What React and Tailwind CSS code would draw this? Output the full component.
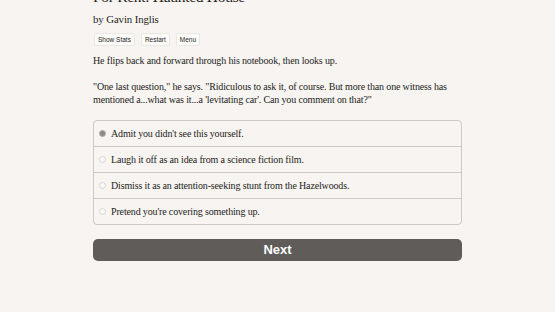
export default function App() {
  const options = [
    "Admit you didn't see this yourself.",
    "Laugh it off as an idea from a science fiction film.",
    "Dismiss it as an attention-seeking stunt from the Hazelwoods.",
    "Pretend you're covering something up.",
  ];
  return (
    <div className="w-[555px] h-[312px] overflow-hidden bg-[#f7f4f1] text-[#262422]" style={{ fontFamily: '"Liberation Serif", serif' }}>
      <div className="w-[369px] ml-[93px] -mt-[13px]">
        <h1 className="text-[15.5px] leading-[20px] m-0 tracking-[-0.3px]">For Rent: Haunted House</h1>
        <div className="text-[10.8px] leading-[14px] mt-[5px] tracking-[-0.1px]">by Gavin Inglis</div>
        <div className="flex gap-[6px] mt-[7px] ml-[1px]" style={{ fontFamily: '"Liberation Sans", sans-serif' }}>
          <button className="text-[6.5px] leading-[7px] px-[3px] py-[2px] bg-[#fcfbf9] border border-[#ebe7e3] rounded-[2px]">Show Stats</button>
          <button className="text-[6.5px] leading-[7px] px-[3px] py-[2px] bg-[#fcfbf9] border border-[#ebe7e3] rounded-[2px]">Restart</button>
          <button className="text-[6.5px] leading-[7px] px-[3px] py-[2px] bg-[#fcfbf9] border border-[#ebe7e3] rounded-[2px]">Menu</button>
        </div>
        <p className="text-[10px] leading-[13px] mt-[8px] tracking-[-0.15px]">He flips back and forward through his notebook, then looks up.</p>
        <p className="text-[10px] leading-[13px] mt-[13px] tracking-[-0.15px]">"One last question," he says. "Ridiculous to ask it, of course. But more than one witness has mentioned a...what was it...a 'levitating car'. Can you comment on that?"</p>
        <div className="mt-[14px] border border-[#cdc9c5] rounded-[4px]">
          {options.map((o, i) => (
            <div key={i} className={"h-[25px] box-content flex items-center pl-[5px] text-[10px] tracking-[-0.15px] " + (i > 0 ? "border-t border-[#cdc9c5]" : "")}>
              <span className={"w-[7px] h-[7px] rounded-full border mr-[5px] " + (i === 0 ? "bg-[#8d8986] border-[#b0aca9]" : "bg-[#faf8f6] border-[#d8d4d0]")}></span>
              <span>{o}</span>
            </div>
          ))}
        </div>
        <button className="mt-[14px] w-full h-[22px] rounded-[5px] bg-[#5f5c59] text-white text-[13px] font-bold" style={{ fontFamily: '"Liberation Sans", sans-serif' }}>Next</button>
      </div>
    </div>
  );
}
